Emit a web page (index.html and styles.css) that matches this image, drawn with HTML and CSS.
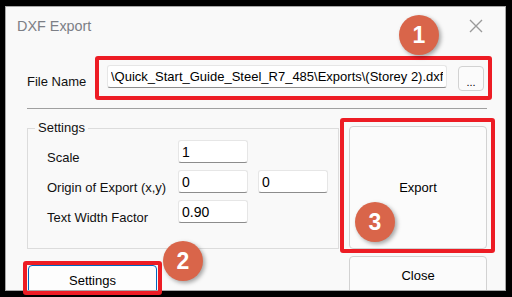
FILE: index.html
```html
<!DOCTYPE html>
<html lang="en">
<head>
    <meta charset="UTF-8">
    <meta name="viewport" content="width=device-width, initial-scale=1.0">
    <title>DXF Export</title>
    <link rel="stylesheet" href="styles.css">
</head>
<body>
    <div class="window">
        <div class="titlebar">
            <span class="title">DXF Export</span>
            <svg class="close-x" width="14" height="14" viewBox="0 0 14 14">
                <path d="M1 1 L13 13 M13 1 L1 13" stroke="#9a9a9a" stroke-width="1.4" fill="none"/>
            </svg>
        </div>

        <div class="file-row">
            <label class="file-label" for="path">File Name</label>
            <input class="field path" id="path" type="text" value="\Quick_Start_Guide_Steel_R7_485\Exports\(Storey 2).dxf">
            <button class="btn browse">...</button>
        </div>

        <div class="sep"></div>

        <div class="lower">
            <div class="left">
                <fieldset class="group">
                    <legend>Settings</legend>
                    <div class="row">
                        <span class="lbl">Scale</span>
                        <input class="field num" type="text" value="1">
                    </div>
                    <div class="row">
                        <span class="lbl">Origin of Export (x,y)</span>
                        <input class="field num" type="text" value="0">
                        <input class="field num" type="text" value="0">
                    </div>
                    <div class="row">
                        <span class="lbl">Text Width Factor</span>
                        <input class="field num" type="text" value="0.90">
                    </div>
                </fieldset>
                <button class="btn settings-btn">Settings</button>
            </div>
            <div class="right">
                <button class="btn export-btn">Export</button>
                <button class="btn close-btn">Close</button>
            </div>
        </div>
    </div>

    <!-- tutorial callouts -->
    <div class="box box-1"></div>
    <div class="box box-2"></div>
    <div class="box box-3"></div>
    <div class="badge badge-1">1</div>
    <div class="badge badge-2">2</div>
    <div class="badge badge-3">3</div>
</body>
</html>
```

FILE: styles.css
```css
body {
    margin: 0;
    width: 512px;
    height: 297px;
    overflow: hidden;
    position: relative;
    background: #000;
    font-family: "Liberation Sans", Arial, sans-serif;
    font-size: 13px;
    color: #111;
}
.window {
    box-sizing: border-box;
    width: 501px;
    height: 285px;
    margin: 6px 0 0 5px;
    border: 1px solid #a8a8a8;
    background: #f9f9f9;
    overflow: hidden;
}
.titlebar {
    height: 37px;
    display: flex;
    align-items: center;
    justify-content: space-between;
    padding: 0 22px 0 11px;
}
.title {
    font-size: 14.4px;
    color: #7c7f86;
}
.file-row {
    display: flex;
    align-items: flex-start;
    margin: 21px 0 0 21px;
}
.file-label {
    width: 80px;
    line-height: 16px;
    margin-top: 9px;
}
.field {
    box-sizing: border-box;
    height: 23px;
    margin: 0;
    padding: 0 3px;
    border: 1px solid #e6e6e6;
    border-bottom: 1px solid #8c8c8c;
    border-radius: 3px;
    background: #fff;
    font-family: "Liberation Sans", Arial, sans-serif;
    font-size: 13px;
    color: #000;
    outline: none;
}
.path {
    width: 340px;
}
.num {
    width: 70px;
    margin-right: 10px;
    font-size: 14px;
}
.btn {
    box-sizing: border-box;
    margin: 0;
    padding: 0;
    border: 1px solid #d2d2d2;
    border-radius: 4px;
    background: #fbfbfb;
    font-family: "Liberation Sans", Arial, sans-serif;
    font-size: 13px;
    color: #000;
}
.browse {
    width: 26px;
    height: 25px;
    margin: 1px 0 0 11px;
    font-size: 11px;
    padding-top: 6px;
}
.sep {
    height: 0;
    margin: 17px 0 0 21px;
    width: 460px;
    border-top: 1px solid #a0a0a0;
}
.lower {
    display: grid;
    grid-template-columns: 311px 138px;
    column-gap: 11px;
    margin-left: 21px;
}
.left {
    padding-top: 11px;
}
.group {
    box-sizing: border-box;
    width: 311px;
    margin: 0;
    padding: 4px 0 25px 7px;
    border: 1px solid #dcdcdc;
    border-radius: 0;
}
.group legend {
    padding: 0 3px;
    line-height: 16px;
}
.row {
    display: flex;
    align-items: flex-start;
    height: 23px;
    padding-left: 12px;
    margin-bottom: 7px;
}
.row:last-child {
    margin-bottom: 0;
}
.lbl {
    width: 131px;
    line-height: 16px;
    margin-top: 10px;
}
.settings-btn {
    display: block;
    width: 129px;
    height: 30px;
    margin: 16px 0 0 1px;
    border: 1px solid #0067c0;
    background: #fdfdfd;
}
.right {
    display: flex;
    flex-direction: column;
    padding-top: 17px;
}
.export-btn {
    height: 123px;
}
.close-btn {
    height: 38px;
    margin-top: 7px;
}

/* callouts */
.box {
    position: absolute;
    box-sizing: border-box;
    border: 4px solid #ed1c24;
    border-radius: 3px;
}
.box-1 { left: 95px; top: 56px; width: 397px; height: 44px; }
.box-2 { left: 23px; top: 261px; width: 139px; height: 34px; }
.box-3 { left: 340px; top: 118px; width: 155px; height: 135px; }
.badge {
    position: absolute;
    width: 40px;
    height: 40px;
    border-radius: 50%;
    background: #d9654a;
    color: #fff;
    font-family: "Liberation Sans", Arial, sans-serif;
    font-weight: bold;
    font-size: 23px;
    line-height: 40px;
    text-align: center;
    box-shadow: 2px 2px 4px rgba(0, 0, 0, 0.35);
}
.badge-1 { left: 399px; top: 15px; }
.badge-2 { left: 163px; top: 241px; }
.badge-3 { left: 355px; top: 202px; }
```
